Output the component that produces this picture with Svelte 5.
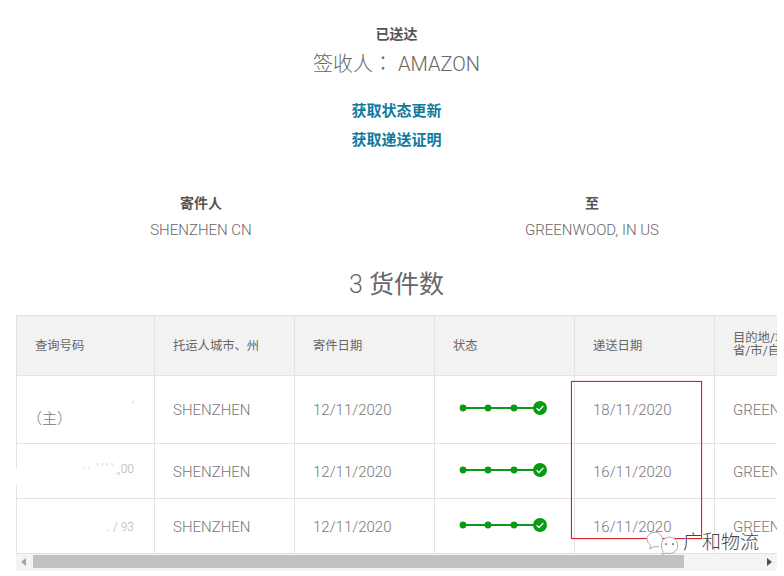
<script>
  const rows = [
    { h: 68, date: "18/11/2020", cls: "first" },
    { h: 55, date: "16/11/2020", cls: "second" },
    { h: 55, date: "16/11/2020", cls: "third" }
  ];
</script>

<div class="page">
  <section class="summary">
    <div class="status">已送达</div>
    <div class="signed">签收人<span class="colon">：</span> AMAZON</div>
    <a class="link first-link" href="#top">获取状态更新</a>
    <a class="link" href="#top">获取递送证明</a>
  </section>

  <section class="parties">
    <div class="party">
      <div class="party-label">寄件人</div>
      <div class="party-value">SHENZHEN CN</div>
    </div>
    <div class="party">
      <div class="party-label">至</div>
      <div class="party-value">GREENWOOD, IN US</div>
    </div>
  </section>

  <h2 class="count"><span class="num">3</span> 货件数</h2>

  <div class="table-wrap">
    <table>
      <thead>
        <tr>
          <th>查询号码</th>
          <th>托运人城市、州</th>
          <th>寄件日期</th>
          <th>状态</th>
          <th>递送日期</th>
          <th class="two-line">目的地/城市<br />省/市/自治区</th>
        </tr>
      </thead>
      <tbody>
        {#each rows as row}
          <tr class={row.cls} style="height: {row.h}px">
            <td class="track">
              {#if row.cls === "first"}
                <span class="scrap scrap-a">'</span>
                <span class="main-tag">（主）</span>
              {:else if row.cls === "second"}
                <span class="scrap scrap-b">· ·  ' ' ' ' ,,00</span>
              {:else}
                <span class="scrap scrap-c">. / 93</span>
              {/if}
            </td>
            <td>SHENZHEN</td>
            <td>12/11/2020</td>
            <td class="progress-cell">
              <svg width="90" height="18" viewBox="0 0 90 18">
                <line x1="4" y1="9" x2="84" y2="9" stroke="#0b9a14" stroke-width="2" />
                <circle cx="4" cy="9" r="3.4" fill="#0b9a14" />
                <circle cx="29" cy="9" r="3.4" fill="#0b9a14" />
                <circle cx="55" cy="9" r="3.4" fill="#0b9a14" />
                <circle cx="81" cy="9" r="7" fill="#0b9a14" />
                <path d="M77.6 9.2l2.4 2.3 4.4-4.6" fill="none" stroke="#fff" stroke-width="1.3" />
              </svg>
            </td>
            <td>{row.date}</td>
            <td>GREENWOOD</td>
          </tr>
        {/each}
      </tbody>
    </table>
    <div class="scrollbar">
      <span class="arrow left"></span>
      <div class="thumb"></div>
      <span class="arrow right"></span>
    </div>
    <div class="patch"></div>
  </div>

  <div class="red-box"></div>

  <div class="watermark">
    <svg width="35" height="28" viewBox="0 0 30 24">
      <g fill="#fff" stroke="#9a9a9a" stroke-width="0.7">
        <path d="M15 9c0-4-4-7-8-6C3 4 1 7 2 10c.5 2 2 3 3 4l-1 3 4-2c2 .5 3 0 4 0" />
        <path d="M14 14c0-4 3-7 7-7s7 3 7 7-3 7-7 7c-1 0-2 0-3-.5l-3 1.5 .5-3c-1-1.3-1.5-3-1.5-5z" />
      </g>
      <circle cx="18" cy="13" r="0.9" fill="#8a8a8a" />
      <circle cx="24" cy="13" r="0.9" fill="#8a8a8a" />
    </svg>
    <span>广和物流</span>
  </div>
</div>

<style>
  :global(body) {
    margin: 0;
    background: #fff;
  }

  .page {
    position: relative;
    width: 784px;
    height: 576px;
    overflow: hidden;
    font-family: Roboto, "Noto Sans CJK SC", sans-serif;
    font-weight: 300;
    color: #666;
    box-sizing: border-box;
    padding: 0 7px 0 16px;
  }

  .summary {
    display: flex;
    flex-direction: column;
    align-items: center;
    padding-top: 25px;
  }

  .status {
    font-size: 14px;
    line-height: 18px;
    font-weight: 700;
    color: #555;
  }

  .signed {
    font-size: 20px;
    line-height: 28px;
    margin-top: 6px;
    color: #666;
  }

  .colon {
    font-family: "Noto Sans CJK TC", sans-serif;
  }

  .link {
    font-size: 15px;
    line-height: 20px;
    font-weight: 700;
    color: #0f7a9f;
    text-decoration: none;
    margin-top: 9px;
  }

  .first-link {
    margin-top: 23px;
  }

  .parties {
    display: grid;
    grid-template-columns: 391px 391px;
    margin: 44px 0 0 -10.5px;
    text-align: center;
  }

  .party-label {
    font-size: 14px;
    line-height: 18px;
    font-weight: 700;
    color: #555;
  }

  .party-value {
    font-size: 15px;
    line-height: 20px;
    margin-top: 8px;
  }

  .count {
    margin: 29px 0 0;
    font-size: 25px;
    line-height: 32px;
    font-weight: 400;
    color: #666;
    text-align: center;
  }

  .num {
    font-weight: 300;
  }

  .table-wrap {
    position: relative;
    width: 761px;
    margin-top: 14px;
    overflow: hidden;
  }

  table {
    border-collapse: collapse;
    table-layout: fixed;
    width: 838px;
    font-size: 15px;
    border-top: 1px solid #e2e2e2;
  }

  th,
  td {
    border: 1px solid #e2e2e2;
    box-sizing: border-box;
    padding: 0 18px;
    text-align: left;
    white-space: nowrap;
    overflow: hidden;
  }

  th:first-child,
  td:first-child {
    width: 138px;
  }

  th,
  td {
    width: 140px;
  }

  thead tr {
    height: 60px;
    background: #f2f2f3;
  }

  th {
    font-size: 12.3px;
    font-weight: 400;
    color: #666;
    padding-bottom: 2px;
  }

  th.two-line {
    line-height: 13px;
  }

  td {
    color: #777;
    padding-top: 1px;
  }

  td.track {
    position: relative;
    padding: 0;
  }

  .main-tag {
    position: absolute;
    left: 10px;
    top: 33px;
    font-size: 15px;
    line-height: 20px;
  }

  .scrap {
    position: absolute;
    font-size: 12px;
    color: #b4b4b4;
    white-space: pre;
  }

  .scrap-a {
    right: 20px;
    top: 24px;
  }

  .scrap-b {
    right: 20px;
    top: 18px;
  }

  .scrap-c {
    right: 20px;
    top: 21px;
  }

  td.progress-cell {
    padding: 0 0 2px 24px;
    line-height: 0;
  }

  tr.first td.progress-cell {
    padding-bottom: 4px;
  }

  .scrollbar {
    display: flex;
    align-items: center;
    height: 17px;
    background: #f4f4f4;
    box-sizing: border-box;
    padding: 2px 0 4px;
  }

  .thumb {
    width: 651px;
    height: 13px;
    margin-left: 17px;
    background: #c1c1c1;
  }

  .arrow {
    width: 0;
    height: 0;
    border-top: 4px solid transparent;
    border-bottom: 4px solid transparent;
  }

  .arrow.left {
    position: absolute;
    left: 5px;
    border-right: 5px solid #a3a3a3;
  }

  .arrow.right {
    position: absolute;
    right: 5px;
    border-left: 5px solid #505050;
  }

  .patch {
    position: absolute;
    left: 0;
    top: 154px;
    width: 3px;
    height: 16px;
    background: #fff;
  }

  .red-box {
    position: absolute;
    left: 571px;
    top: 381px;
    width: 129px;
    height: 156px;
    border: 1px solid #d3262c;
    box-shadow: 0 0 1px rgba(211, 38, 44, 0.7);
  }

  .watermark {
    position: absolute;
    left: 645px;
    top: 529px;
    display: flex;
    align-items: center;
    gap: 3px;
    font-size: 19px;
    line-height: 24px;
    font-weight: 300;
    color: #444;
    text-shadow: 0 0 2px #fff;
  }
</style>
